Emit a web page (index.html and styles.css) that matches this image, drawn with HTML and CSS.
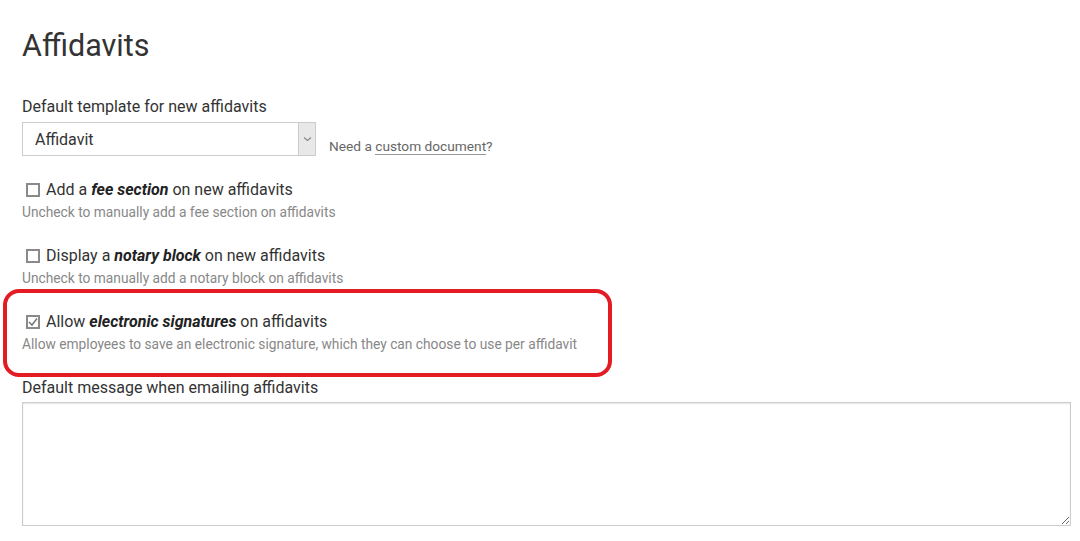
FILE: index.html
```html
<!DOCTYPE html>
<html>
<head>
<meta charset="utf-8">
<link rel="stylesheet" href="styles.css">
</head>
<body>
<div class="page">
  <h1 class="title">Affidavits</h1>

  <div class="field">
    <label class="label">Default template for new affidavits</label>
    <div class="select-row">
      <div class="select">
        <span class="select-text">Affidavit</span>
        <span class="select-arrow">
          <svg width="9" height="6" viewBox="0 0 9 6"><path d="M1 1.5 L4.5 4.5 L8 1.5" fill="none" stroke="#888" stroke-width="1.2"/></svg>
        </span>
      </div>
      <span class="need">Need a <a class="link">custom document</a>?</span>
    </div>
  </div>

  <div class="option first">
    <div class="check-line">
      <span class="box"></span>
      <span>Add a <b><i>fee section</i></b> on new affidavits</span>
    </div>
    <div class="help">Uncheck to manually add a fee section on affidavits</div>
  </div>

  <div class="option">
    <div class="check-line">
      <span class="box"></span>
      <span>Display a <b><i>notary block</i></b> on new affidavits</span>
    </div>
    <div class="help">Uncheck to manually add a notary block on affidavits</div>
  </div>

  <div class="option highlighted">
    <div class="ring"></div>
    <div class="check-line">
      <span class="box checked">
        <svg width="10" height="10" viewBox="0 0 10 10"><path d="M1 5 L4 8 L9 1.5" fill="none" stroke="#777" stroke-width="1.5"/></svg>
      </span>
      <span>Allow <b><i>electronic signatures</i></b> on affidavits</span>
    </div>
    <div class="help">Allow employees to save an electronic signature, which they can choose to use per affidavit</div>
  </div>

  <div class="field message">
    <label class="label">Default message when emailing affidavits</label>
    <textarea class="textarea"></textarea>
  </div>
</div>
</body>
</html>
```
FILE: styles.css
```css
* { box-sizing: border-box; }
html, body { margin: 0; padding: 0; background: #fff; }
body {
  font-family: Roboto, "Liberation Sans", sans-serif;
  color: #333;
}
.page {
  padding: 24px 9px 0 22px;
}
.title {
  margin: 0;
  font-size: 30.5px;
  font-weight: 400;
  line-height: 44px;
  color: #333;
}
.field { margin-top: 29px; }
.label {
  display: block;
  font-size: 16px;
  line-height: 20px;
  color: #333;
}
.select-row {
  display: flex;
  align-items: flex-end;
  margin-top: 5px;
}
.select {
  width: 294px;
  height: 34px;
  border: 1px solid #ccc;
  display: flex;
  align-items: center;
  background: #fff;
}
.select-text {
  flex: 1;
  padding-left: 12px;
  font-size: 16px;
  color: #333;
}
.select-arrow {
  width: 17px;
  height: 32px;
  background: #e8e8e8;
  border-left: 1px solid #ccc;
  display: flex;
  align-items: center;
  justify-content: center;
}
.select-arrow svg { display: block; }
.need {
  margin-left: 13px;
  font-size: 13.7px;
  color: #666;
  line-height: 18px;
  margin-bottom: 1px;
}
.link {
  color: #666;
  text-decoration: none;
  border-bottom: 1px solid #999;
}
.option {
  margin-top: 25px;
}
.option.first { margin-top: 24px; }
.check-line {
  display: flex;
  align-items: center;
  font-size: 16px;
  line-height: 20px;
  color: #333;
  padding-left: 4px;
}
.check-line b { color: #222; }
.box {
  flex-shrink: 0;
  width: 14px;
  height: 14px;
  border: 2px solid #8a8a8a;
  margin-right: 6px;
  display: inline-flex;
  align-items: center;
  justify-content: center;
  background: #fff;
}
.box svg { display: block; }
.help {
  font-size: 13.75px;
  line-height: 18px;
  color: #888;
  margin-top: 3px;
}
.highlighted { position: relative; }
.ring {
  position: absolute;
  left: -19px;
  top: -23px;
  width: 609px;
  height: 88px;
  border: 4px solid #e31b23;
  border-radius: 16px;
  pointer-events: none;
}
.message { margin-top: 25px; }
.textarea {
  display: block;
  width: 100%;
  height: 124px;
  margin-top: 4px;
  border: 1px solid #ccc;
  box-shadow: inset 0 1px 2px rgba(0,0,0,0.1);
  resize: vertical;
  font-family: inherit;
}
```
